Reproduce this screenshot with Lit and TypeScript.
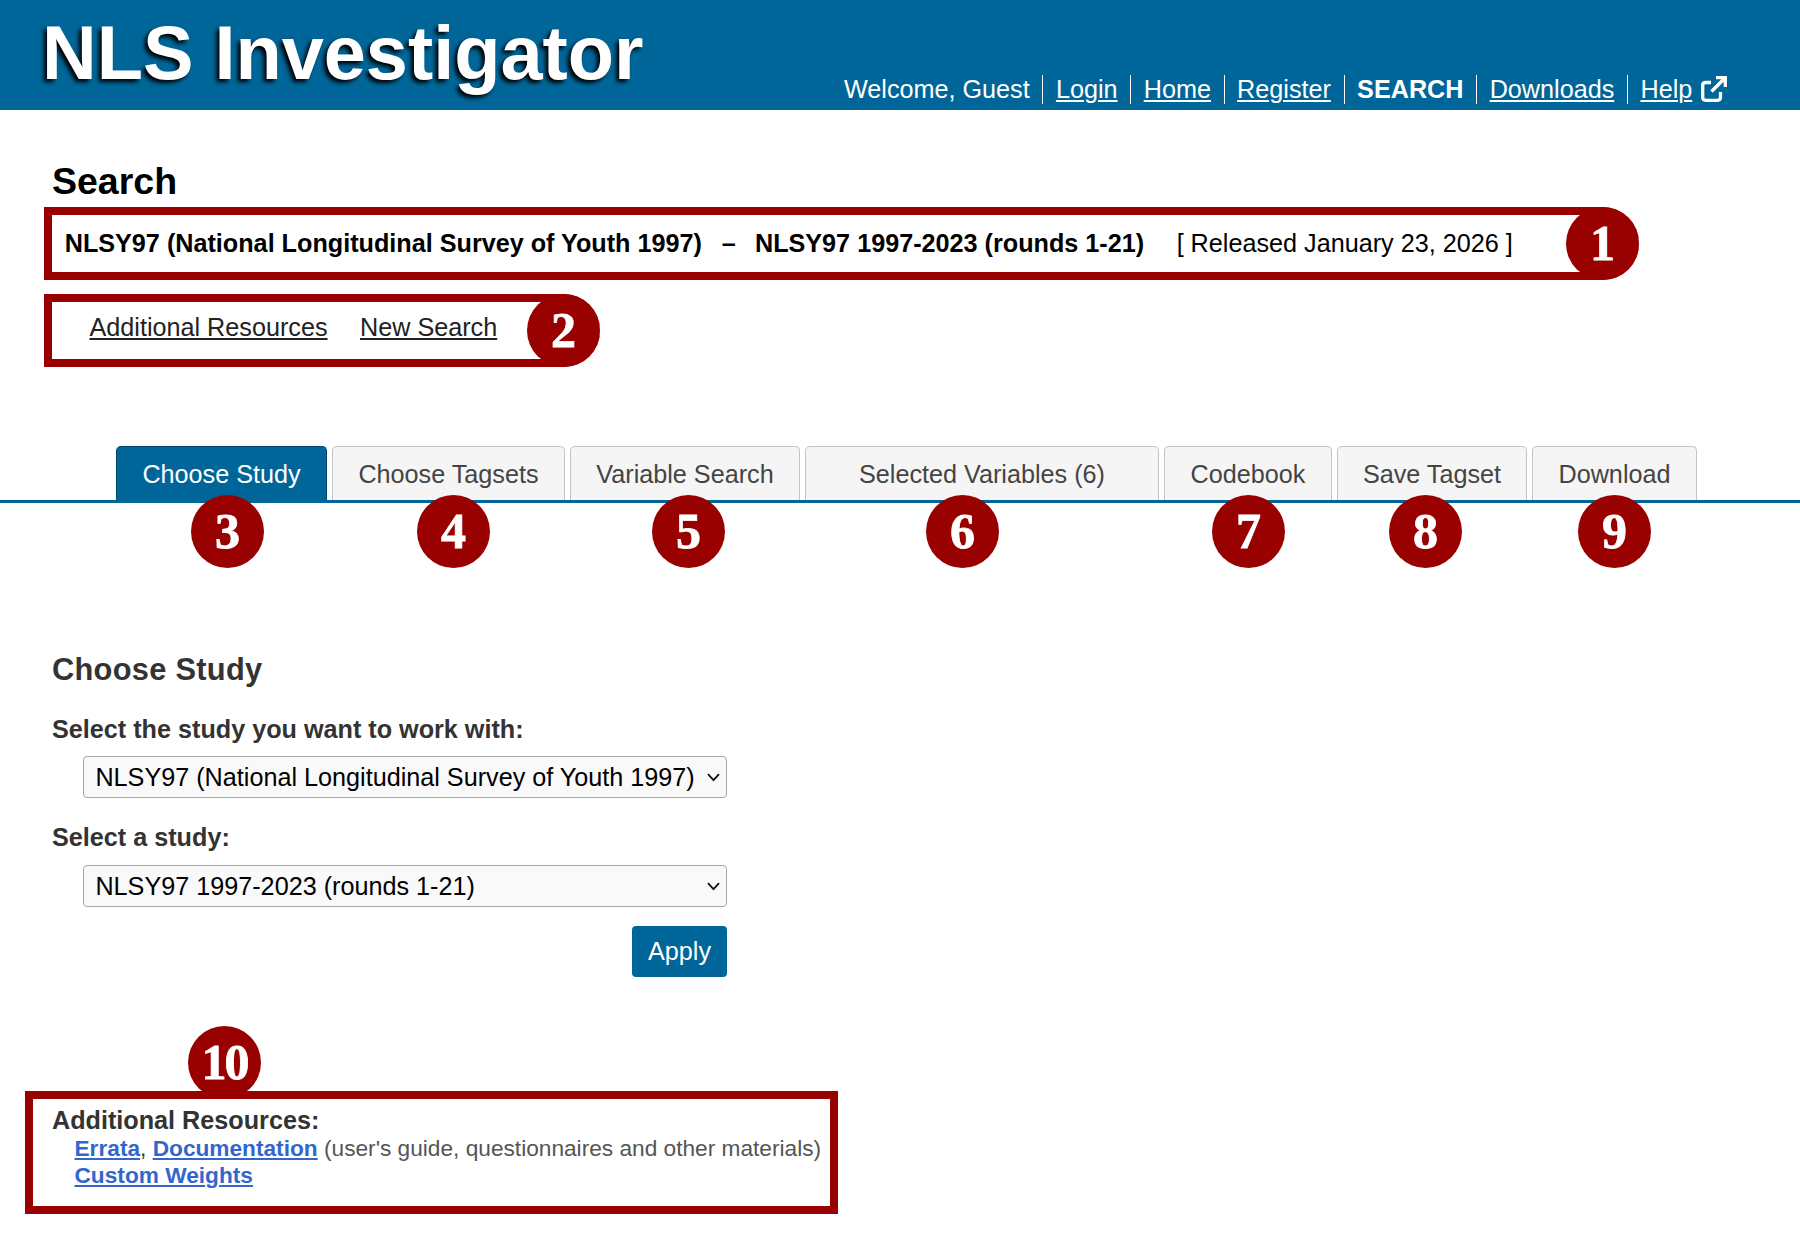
import { LitElement, html, css } from "lit";
import { customElement, property } from "lit/decorators.js";

@customElement("num-badge")
class NumBadge extends LitElement {
  @property() label = "";
  static styles = css`
    :host {
      display: flex;
      flex: none;
      align-items: center;
      justify-content: center;
      width: 73px;
      height: 73px;
      border-radius: 50%;
      background: #990000;
      color: #fff;
      font: bold 50px/73px "Liberation Serif", serif;
      -webkit-text-stroke: 0.8px #fff;
    }
  `;
  render() {
    return html`${this.label}`;
  }
}

@customElement("site-header")
class SiteHeader extends LitElement {
  static styles = css`
    :host {
      display: flex;
      height: 110px;
      background: #006699;
      color: #fff;
    }
    .title {
      margin: 0;
      width: 802px;
      padding: 8px 0 0 42px;
      font-size: 75.7px;
      line-height: 90px;
      font-weight: bold;
      text-shadow: -3px 3px 4px #000;
    }
    .nav {
      display: flex;
      align-items: flex-start;
      padding-top: 75px;
      white-space: nowrap;
    }
    .item {
      display: flex;
      line-height: 29px;
      height: 29px;
      padding-right: 12.6px;
    }
    .item + .item {
      border-left: 1px solid #fff;
      padding-left: 12.6px;
    }
    .link {
      text-decoration: underline;
      text-decoration-thickness: 2px;
      text-underline-offset: 2px;
    }
    .ext {
      margin: 1px 0 0 9px;
    }
  `;
  render() {
    return html`
      <h1 class="title">NLS Investigator</h1>
      <nav class="nav">
        <span class="item">Welcome, Guest</span>
        ${["Login", "Home", "Register"].map(
          (t) => html`<span class="item"><a class="link">${t}</a></span>`
        )}
        <span class="item"><b>SEARCH</b></span>
        <span class="item"><a class="link">Downloads</a></span>
        <span class="item">
          <a class="link">Help</a>
          <svg class="ext" width="26" height="26" viewBox="0 0 26 26" fill="none" stroke="#fff" stroke-width="3.3">
            <path d="M10 6.5H4.7Q1.700 6.500 1.700 9.500V21.300Q1.700 24.300 4.700 24.300H16.500Q19.500 24.300 19.500 21.300V16" />
            <path d="M10.500 15.500L24 2M15 1.700H24.300V11" />
          </svg>
        </span>
      </nav>
    `;
  }
}

const TABS = [
  { label: "Choose Study", width: 211, badge: "3", x: 75 },
  { label: "Choose Tagsets", width: 233, badge: "4", x: 85 },
  { label: "Variable Search", width: 230, badge: "5", x: 82 },
  { label: "Selected Variables (6)", width: 354, badge: "6", x: 121 },
  { label: "Codebook", width: 168, badge: "7", x: 48 },
  { label: "Save Tagset", width: 190, badge: "8", x: 52 },
  { label: "Download", width: 165, badge: "9", x: 46 },
];

@customElement("tab-bar")
class TabBar extends LitElement {
  static styles = css`
    :host {
      display: flex;
      gap: 5px;
      height: 54px;
      padding-left: 116px;
      border-bottom: 3px solid #006699;
    }
    .tab {
      position: relative;
      box-sizing: border-box;
      height: 54px;
      border: 1px solid #c4c4c4;
      border-bottom: 0;
      border-radius: 5px 5px 0 0;
      background: #f5f5f5;
      color: #444;
      text-align: center;
      line-height: 54px;
      white-space: nowrap;
    }
    .tab.active {
      background: #006699;
      border-color: #004466;
      color: #fff;
    }
    .badge {
      position: absolute;
      top: 48px;
    }
  `;
  render() {
    return TABS.map(
      (t, i) => html`<div class="tab ${i === 0 ? "active" : ""}" style="width:${t.width}px">
        ${t.label}<num-badge class="badge" label=${t.badge} style="left:${t.x - 1}px"></num-badge>
      </div>`
    );
  }
}

@customElement("study-select")
class StudySelect extends LitElement {
  @property() value = "";
  static styles = css`
    :host {
      box-sizing: border-box;
      display: flex;
      align-items: center;
      justify-content: space-between;
      width: 644px;
      height: 42px;
      margin-left: 31px;
      padding: 0 6.500px 0 11.400px;
      border: 1px solid #a6a6a6;
      border-radius: 4px;
      background: #f9f9f9;
      color: #000;
      line-height: 40px;
      white-space: nowrap;
    }
  `;
  render() {
    return html`<span>${this.value}</span>
      <svg width="13" height="9" viewBox="0 0 13 9" fill="none" stroke="#111" stroke-width="1.800">
        <path d="M1 1.200L6.500 7.200L12 1.200" />
      </svg>`;
  }
}

@customElement("app-root")
class AppRoot extends LitElement {
  static styles = css`
    :host {
      display: flex;
      flex-direction: column;
      width: 1800px;
      height: 1260px;
      overflow: hidden;
      background: #fff;
      color: #000;
      font-family: "Liberation Sans", Arial, sans-serif;
      font-size: 25.2px;
    }
    .search {
      margin: 49px 0 0 52px;
      font-size: 37.5px;
      line-height: 44px;
      font-weight: bold;
    }
    .box {
      box-sizing: border-box;
      display: flex;
      height: 73px;
      margin-left: 44px;
      border: 8px solid #990000;
      border-right: 0;
      border-radius: 0 36px 36px 0;
      line-height: 30px;
      white-space: nowrap;
    }
    .box num-badge {
      margin: -8px 0 0 auto;
    }
    .study {
      width: 1595px;
      margin-top: 4px;
      padding-left: 12.700px;
      font-weight: bold;
    }
    .study span {
      padding-top: 13px;
    }
    .study .dash {
      margin: 0 19.300px 0 19.700px;
    }
    .study .released {
      margin-left: 32.500px;
      font-weight: normal;
    }
    .actions {
      width: 556px;
      margin-top: 14px;
      padding-left: 37.500px;
      color: #222;
    }
    .actions a {
      margin: 10px 32.500px 0 0;
      text-decoration: underline;
      text-decoration-thickness: 2px;
      text-underline-offset: 2px;
    }
    .actions a:nth-of-type(2) {
      margin-right: 0;
    }
    tab-bar {
      margin-top: 79px;
    }
    .form {
      width: 675px;
      margin: 149px 0 0 52px;
      display: flex;
      flex-direction: column;
      color: #333;
      font-weight: bold;
    }
    .h2 {
      margin: 0;
      font-size: 30.8px;
      line-height: 36px;
      letter-spacing: 0.28px;
    }
    .label {
      line-height: 30px;
      margin: 26px 0 12px;
    }
    study-select {
      font-weight: normal;
    }
    .label.second {
      margin: 24px 0 13px;
    }
    .apply {
      align-self: flex-end;
      margin-top: 19px;
      width: 95px;
      height: 51px;
      border-radius: 4px;
      background: #006699;
      color: #fff;
      font-weight: normal;
      line-height: 51px;
      text-align: center;
    }
    .resources {
      position: relative;
      box-sizing: border-box;
      width: 813px;
      height: 123px;
      margin: 114px 0 0 25px;
      padding: 7px 0 0 19px;
      border: 8px solid #990000;
      color: #333;
      font-size: 22.68px;
      line-height: 27px;
      white-space: nowrap;
    }
    .resources num-badge {
      position: absolute;
      left: 155px;
      top: -73px;
      letter-spacing: -2px;
    }
    .heading {
      font-size: 25.2px;
      line-height: 29px;
      font-weight: bold;
    }
    .row {
      padding-left: 22.500px;
    }
    .row a {
      color: #3366cc;
      font-weight: bold;
      text-decoration: underline;
      text-decoration-thickness: 2px;
      text-underline-offset: 2px;
    }
    .note {
      color: #555;
    }
  `;
  render() {
    return html`
      <site-header></site-header>
      <div class="search">Search</div>
      <div class="box study">
        <span>NLSY97 (National Longitudinal Survey of Youth 1997)</span>
        <span class="dash">–</span>
        <span>NLSY97 1997-2023 (rounds 1-21)</span>
        <span class="released">[ Released January 23, 2026 ]</span>
        <num-badge label="1"></num-badge>
      </div>
      <div class="box actions">
        <a>Additional Resources</a><a>New Search</a>
        <num-badge label="2"></num-badge>
      </div>
      <tab-bar></tab-bar>
      <div class="form">
        <h2 class="h2">Choose Study</h2>
        <div class="label">Select the study you want to work with:</div>
        <study-select value="NLSY97 (National Longitudinal Survey of Youth 1997)"></study-select>
        <div class="label second">Select a study:</div>
        <study-select value="NLSY97 1997-2023 (rounds 1-21)"></study-select>
        <div class="apply">Apply</div>
      </div>
      <div class="resources">
        <num-badge label="10"></num-badge>
        <div class="heading">Additional Resources:</div>
        <div class="row"><a>Errata</a>, <a>Documentation</a> <span class="note">(user's guide, questionnaires and other materials)</span></div>
        <div class="row"><a>Custom Weights</a></div>
      </div>
    `;
  }
}
